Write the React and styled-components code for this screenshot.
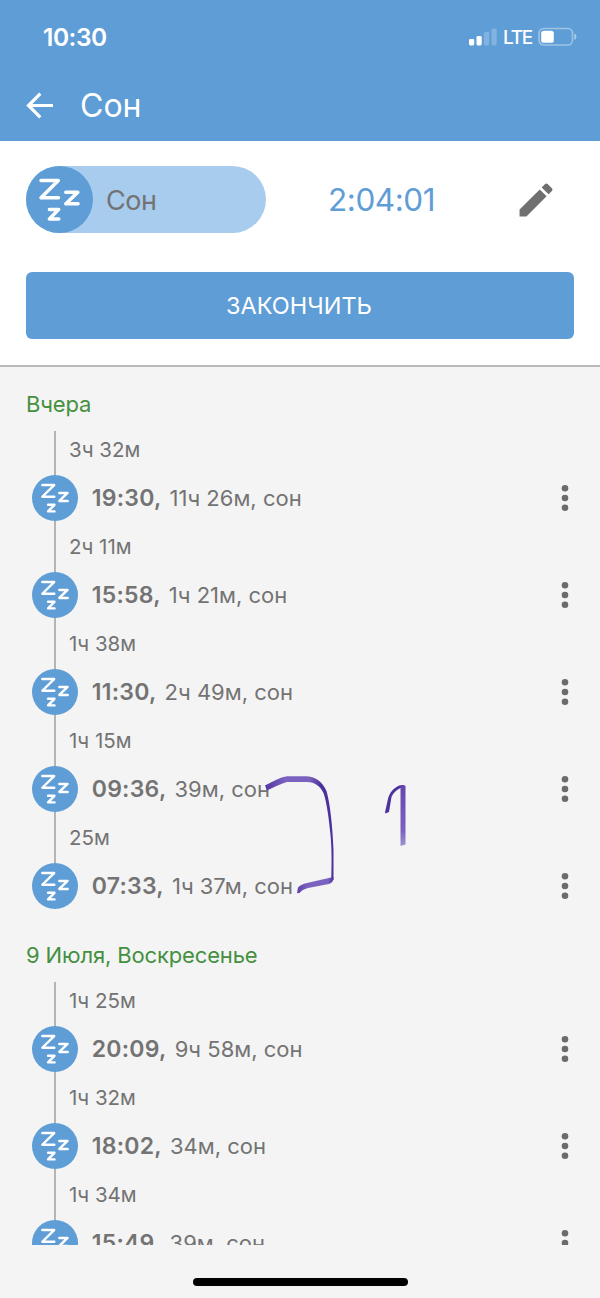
import React from "react";
import styled, { createGlobalStyle } from "styled-components";

const GlobalStyle = createGlobalStyle`
  * { box-sizing: border-box; }
  body {
    margin: 0;
    background: #f4f4f4;
    font-family: Inter, "Liberation Sans", sans-serif;
    color: #737373;
  }
`;

const Screen = styled.div`
  position: relative;
  width: 600px;
  height: 1298px;
  display: flex;
  flex-direction: column;
  overflow: hidden;
  background: #f4f4f4;
`;

const Header = styled.header`
  height: 141px;
  flex: none;
  background: #5f9dd6;
  color: #fff;
`;

const StatusBar = styled.div`
  height: 74px;
  padding: 0 23px 0 43px;
  display: flex;
  align-items: center;
  justify-content: space-between;
`;

const Clock = styled.span`
  font-size: 24.5px;
  font-weight: 600;
  letter-spacing: -0.45px;
`;

const StatusIcons = styled.div`
  display: flex;
  align-items: center;
`;

const Network = styled.span`
  font-size: 19px;
  line-height: 24px;
  font-weight: 500;
  letter-spacing: -1.3px;
  margin: 2px 6px 0 6px;
`;

const TitleBar = styled.div`
  height: 64px;
  padding-left: 26px;
  display: flex;
  align-items: center;
  gap: 26px;
`;

const Title = styled.h1`
  margin: 0;
  font-size: 32px;
  line-height: 40px;
  font-weight: 370;
  letter-spacing: 0;
`;

const ActivePanel = styled.section`
  height: 226px;
  flex: none;
  padding: 25px 26px 0;
  background: #fff;
  border-bottom: 2px solid #bababa;
`;

const TimerRow = styled.div`
  display: flex;
  align-items: center;
  height: 67px;
`;

const Pill = styled.div`
  width: 240px;
  height: 67px;
  display: flex;
  align-items: center;
  gap: 13px;
  border-radius: 34px;
  background: #a7ccee;
  font-size: 27px;
  letter-spacing: -0.5px;
`;

const PillLabel = styled.span`
  padding-top: 2px;
`;

const Badge = styled.span`
  position: relative;
  flex: none;
  display: flex;
  width: ${(p) => p.$size}px;
  height: ${(p) => p.$size}px;
  border-radius: 50%;
  background: #5f9dd6;
`;

const Timer = styled.span`
  width: 191px;
  margin-left: 62px;
  font-size: 31.5px;
  font-weight: 370;
  letter-spacing: -0.45px;
  color: #5f9dd6;
`;

const FinishButton = styled.button`
  display: block;
  width: 100%;
  height: 67px;
  margin-top: 39px;
  padding: 0 2px 0 0;
  border: 0;
  border-radius: 6px;
  background: #5f9dd6;
  color: #fff;
  font: 370 23.5px Inter, "Liberation Sans", sans-serif;
  letter-spacing: 0;
`;

const History = styled.main`
  height: 877.5px;
  flex: none;
  overflow: hidden;
`;

const DayTitle = styled.h2`
  height: ${(p) => p.$height}px;
  margin: 0;
  padding: 0 26px 12.7px;
  display: flex;
  align-items: flex-end;
  font-size: 22px;
  line-height: 28px;
  font-weight: 400;
  letter-spacing: -0.14px;
  color: #45903f;
`;

const Interval = styled.div`
  height: 37px;
  padding-left: 69px;
  background: linear-gradient(#b4b4b4, #b4b4b4) 54px 0 / 2px 100% no-repeat;
  font-size: 20.5px;
  line-height: 37px;
`;

const Entry = styled.div`
  height: 60.1px;
  padding: 0 26px 0 32px;
  display: flex;
  align-items: center;
  background: linear-gradient(#b4b4b4, #b4b4b4) 54px 0 / 2px ${(p) => (p.$last ? "50%" : "100%")} no-repeat;
`;

const EntryText = styled.span`
  flex: 1;
  margin-left: 13.7px;
  white-space: pre;
  font-size: 22px;
  line-height: 30px;
`;

const Time = styled.b`
  margin-right: 1.8px;
  font-size: 23px;
  font-weight: 600;
  letter-spacing: 0.27px;
`;

const MenuDots = styled.svg`
  width: 18px;
  height: 28px;
  fill: #6b6b6b;
`;

const HomeIndicator = styled.div`
  width: 215px;
  height: 8px;
  margin: 33.5px auto 0;
  border-radius: 4px;
  background: #000;
`;

const Ink = styled.svg`
  position: absolute;
  left: 260px;
  top: 770px;
  width: 150px;
  height: 126px;
`;

function SleepBadge({ size }) {
  return (
    <Badge $size={size}>
      <svg width={size} height={size} viewBox="0 0 67 67" fill="none" stroke="#fff" strokeWidth="3.5" strokeLinecap="round" strokeLinejoin="round">
        <path d="M15 14.600H32.300L15 31.700H32.500" />
        <path d="M39.800 26.200H51.800L39.800 37.800H52" />
        <path d="M23.400 43.400H32.700L23.400 53H32.800" />
      </svg>
    </Badge>
  );
}

const days = [
  {
    title: "Вчера",
    height: 63.5,
    entries: [
      ["3ч 32м", "19:30,", "11ч 26м, сон"],
      ["2ч 11м", "15:58,", "1ч 21м, сон"],
      ["1ч 38м", "11:30,", "2ч 49м, сон"],
      ["1ч 15м", "09:36,", "39м, сон"],
      ["25м", "07:33,", "1ч 37м, сон"],
    ],
  },
  {
    title: "9 Июля, Воскресенье",
    height: 65.6,
    entries: [
      ["1ч 25м", "20:09,", "9ч 58м, сон"],
      ["1ч 32м", "18:02,", "34м, сон"],
      ["1ч 34м", "15:49,", "39м, сон"],
    ],
  },
];

export default function App() {
  return (
    <Screen>
      <GlobalStyle />
      <Header>
        <StatusBar>
          <Clock>10:30</Clock>
          <StatusIcons>
            <svg width="28" height="18" viewBox="0 0 28 18" fill="#fff">
              <rect x="0" y="11" width="5.200" height="6.500" rx="1.400" />
              <rect x="7.500" y="8" width="5.200" height="9.500" rx="1.400" />
              <rect x="15" y="4" width="5.200" height="13.500" rx="1.400" opacity=".22" />
              <rect x="22.500" y="0.500" width="5.200" height="17" rx="1.400" opacity=".22" />
            </svg>
            <Network>LTE</Network>
            <svg width="39" height="20" viewBox="0 0 39 20" fill="#fff">
              <rect x="1" y="1.500" width="33.500" height="16.500" rx="4.800" fill="none" stroke="#fff" strokeWidth="1.600" opacity=".4" />
              <rect x="3.200" y="3.700" width="12.600" height="12.100" rx="2.600" />
              <path d="M36.400 6.500v6.400c1.200-.5 2-1.700 2-3.200s-.8-2.700-2-3.200z" opacity=".5" />
            </svg>
          </StatusIcons>
        </StatusBar>
        <TitleBar>
          <svg width="28" height="28" viewBox="0 0 28 28" fill="none" stroke="#fff" strokeWidth="3.200">
            <path d="M27 13.500H2.500M14.300 1.700L2.500 13.500l11.800 11.800" />
          </svg>
          <Title>Сон</Title>
        </TitleBar>
      </Header>

      <ActivePanel>
        <TimerRow>
          <Pill>
            <SleepBadge size={67} />
            <PillLabel>Сон</PillLabel>
          </Pill>
          <Timer>2:04:01</Timer>
          <svg width="34" height="34" viewBox="2.700 2.700 18.600 18.600" fill="#707070">
            <path d="M3 17.250V21h3.750L17.810 9.940l-3.750-3.750L3 17.250zM20.710 7.040c.39-.39.39-1.020 0-1.410l-2.340-2.340c-.39-.39-1.020-.39-1.410 0l-1.830 1.830 3.750 3.750 1.830-1.830z" />
          </svg>
        </TimerRow>
        <FinishButton>ЗАКОНЧИТЬ</FinishButton>
      </ActivePanel>

      <History>
        {days.map((day) => (
          <section key={day.title}>
            <DayTitle $height={day.height}>{day.title}</DayTitle>
            {day.entries.map(([gap, time, detail], i) => (
              <React.Fragment key={time}>
                <Interval>{gap}</Interval>
                <Entry $last={i === day.entries.length - 1}>
                  <SleepBadge size={46} />
                  <EntryText>
                    <Time>{time}</Time> {detail}
                  </EntryText>
                  <MenuDots viewBox="0 0 18 28">
                    <circle cx="9" cy="4.300" r="3.300" />
                    <circle cx="9" cy="14" r="3.300" />
                    <circle cx="9" cy="23.700" r="3.300" />
                  </MenuDots>
                </Entry>
              </React.Fragment>
            ))}
          </section>
        ))}
      </History>
      <HomeIndicator />

      <Ink viewBox="260 770 150 126">
        <defs>
          <linearGradient id="hook" x1="0" x2="1">
            <stop offset="0" stopColor="#5236a3" />
            <stop offset=".3" stopColor="#7c62c0" />
            <stop offset=".65" stopColor="#7c62c0" />
            <stop offset=".82" stopColor="#4c309c" />
          </linearGradient>
          <linearGradient id="tail" x1="0" x2="1">
            <stop offset="0" stopColor="#5e43a8" />
            <stop offset=".3" stopColor="#7c62c0" />
            <stop offset=".85" stopColor="#7c62c0" />
            <stop offset="1" stopColor="#4c309c" />
          </linearGradient>
          <linearGradient id="stem" x1="0" y1="0" x2="0" y2="1">
            <stop offset="0" stopColor="#6545af" />
            <stop offset=".75" stopColor="#7c62c0" />
            <stop offset="1" stopColor="#a094cf" />
          </linearGradient>
        </defs>
        <path fill="url(#hook)" d="M265 785.500C273 781 280 777.500 287 776.200H306C315 776.500 322 781 326.500 791C330 803 332.500 825 333.500 850V880H331.200C332 860 331.500 845 330.500 835C329 820 327 803 323.500 793C320 786 315 782 307 782H287C280 784 274 787 267 790.500Z" />
        <path fill="url(#tail)" d="M333.500 877Q333.500 882.500 329 884L308 888Q302 889.500 299.500 893L297 893.200L298 887.500Q301 884 307 883L331 877.500Z" />
        <path fill="#4e319f" d="M385 812.500L387.500 801Q389 792 395 788Q400 784 404 785.500L402.500 787Q394 790.500 391.500 797L389 812L385.500 813.500Z" />
        <path fill="url(#stem)" d="M400.500 786.500Q403 784 405.500 786V844.500L400.500 846Z" />
      </Ink>
    </Screen>
  );
}
